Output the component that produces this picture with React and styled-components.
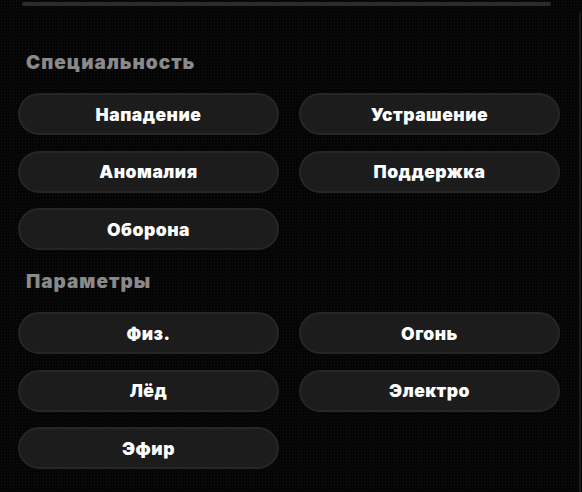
import styled, { createGlobalStyle } from "styled-components";

const GlobalStyle = createGlobalStyle`
    html, body {
        margin: 0;
        padding: 0;
        background-color: #050505;
    }
    body {
        font-family: Inter, "Noto Sans", sans-serif;
    }
`

const Page = styled.div`
    width: 582px;
    height: 492px;
    box-sizing: border-box;
    background-color: #050505;
    background-image: radial-gradient(#121212 0.6px, transparent 0.8px);
    background-size: 3px 3px;
    padding-top: 2px;
    overflow: hidden;
`

const TopBar = styled.div`
    height: 4px;
    margin: 0 31px 0 22px;
    border-radius: 2px;
    background-color: #2b2b2b;
`

const Panel = styled.div`
    margin-top: 6px;
    height: 480px;
    box-sizing: border-box;
    border-right: 2px solid #1a1a1a;
    margin-right: 1px;
    padding: 39px 21px 0 18px;
`

const Section = styled.section`
    display: flex;
    flex-direction: column;
    gap: 18px;
    margin-bottom: ${(p) => p.$gapAfter || 0}px;
`

const Title = styled.h2`
    margin: 0 0 0 8px;
    font-size: 19px;
    line-height: 24px;
    font-weight: 900;
    letter-spacing: 1px;
    color: #8a8a8a;
`

const Grid = styled.div`
    display: grid;
    grid-template-columns: 261px 261px;
    column-gap: 20px;
    row-gap: 15.5px;
`

const Chip = styled.button`
    height: 42px;
    box-sizing: border-box;
    border: 2px solid #262626;
    border-radius: 21px;
    background-color: #1c1c1c;
    color: #ffffff;
    font-family: Inter, "Noto Sans", sans-serif;
    font-size: 17.5px;
    font-weight: 900;
    letter-spacing: 0.5px;
    cursor: pointer;
    padding: 0;
`

const specialties = ["Нападение", "Устрашение", "Аномалия", "Поддержка", "Оборона"];
const params = ["Физ.", "Огонь", "Лёд", "Электро", "Эфир"];

export default function App() {
    return (
        <>
            <GlobalStyle />
            <Page>
                <TopBar />
                <Panel>
                    <Section $gapAfter={20}>
                        <Title>Специальность</Title>
                        <Grid>
                            {specialties.map((s) => (
                                <Chip key={s}>{s}</Chip>
                            ))}
                        </Grid>
                    </Section>
                    <Section>
                        <Title>Параметры</Title>
                        <Grid>
                            {params.map((s) => (
                                <Chip key={s}>{s}</Chip>
                            ))}
                        </Grid>
                    </Section>
                </Panel>
            </Page>
        </>
    );
}
